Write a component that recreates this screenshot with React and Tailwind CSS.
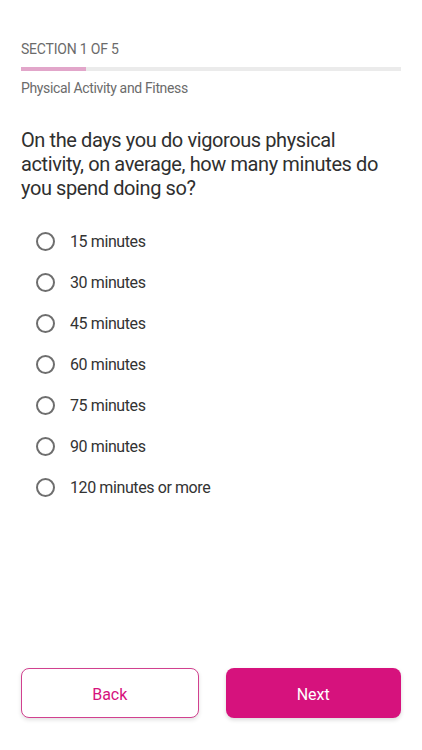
import React, { useState } from "react";

const options = [
  "15 minutes",
  "30 minutes",
  "45 minutes",
  "60 minutes",
  "75 minutes",
  "90 minutes",
  "120 minutes or more",
];

export default function App() {
  const [selected, setSelected] = useState(null);

  return (
    <div
      className="h-[750px] w-full bg-white flex flex-col px-[21px] pt-[39px] pb-[32px]"
      style={{ fontFamily: "Roboto, 'Noto Sans', sans-serif" }}
    >
      <p className="text-[14px] leading-5 text-[#6b6b6b] tracking-[-0.2px]">SECTION 1 OF 5</p>
      <div className="mt-2 h-[4px] w-full bg-[#ebebeb]">
        <div className="h-full w-[65px] bg-[#e2a6ca]" />
      </div>
      <p className="mt-[7px] text-[14px] leading-5 text-[#6b6b6b] tracking-[-0.35px]">
        Physical Activity and Fitness
      </p>

      <h1 className="mt-[30px] text-[20px] leading-6 text-[#2f2f2f] tracking-[-0.4px]">
        On the days you do vigorous physical activity, on average, how many minutes do you spend doing so?
      </h1>

      <div className="mt-[21px] flex flex-col">
        {options.map((opt, i) => (
          <button
            key={opt}
            onClick={() => setSelected(i)}
            className="h-[41px] flex items-center text-left"
          >
            <span className="ml-[15px] w-[19px] h-[19px] rounded-full border-2 border-[#6e6e6e] flex items-center justify-center">
              {selected === i && <span className="w-[9px] h-[9px] rounded-full bg-[#d6127d]" />}
            </span>
            <span className="ml-[15px] text-[16px] text-[#333] tracking-[-0.4px]">{opt}</span>
          </button>
        ))}
      </div>

      <div className="mt-auto flex gap-[27px]">
        <button className="flex-1 h-[50px] pt-[3px] rounded-lg border border-[#d1418f] bg-white text-[#d6127d] text-[16px] shadow-[0_2px_4px_rgba(0,0,0,0.12)]">
          Back
        </button>
        <button className="flex-1 h-[50px] pt-[3px] rounded-lg bg-[#d6127d] text-white text-[16px] shadow-[0_2px_4px_rgba(0,0,0,0.15)]">
          Next
        </button>
      </div>
    </div>
  );
}
